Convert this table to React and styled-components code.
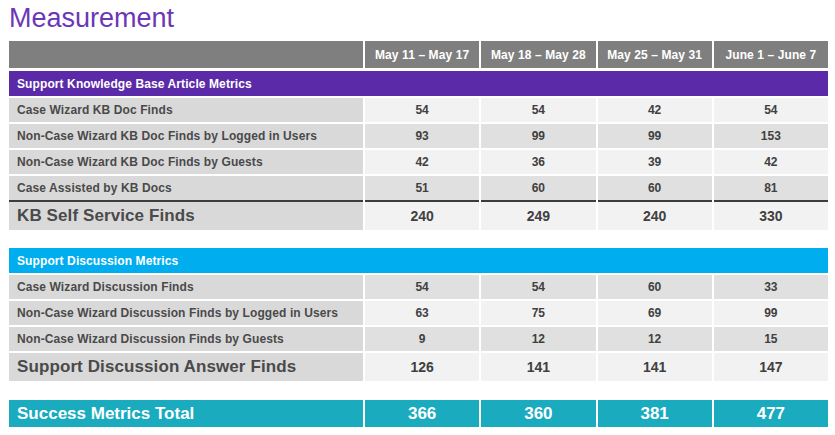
import React from "react";
import styled, { createGlobalStyle } from "styled-components";

const Global = createGlobalStyle`
  body {
    margin: 0;
    background: #fff;
    font-family: "Liberation Sans", Arial, sans-serif;
  }
`;

const Page = styled.div`
  padding: 0 7px 0 9px;
`;

const Title = styled.h1`
  margin: 0;
  height: 41px;
  font-size: 27px;
  font-weight: normal;
  line-height: 36px;
  color: #6c36b6;
`;

const Grid = styled.div`
  display: grid;
  grid-template-columns: 354px repeat(4, 1fr);
  column-gap: 2px;
  row-gap: 2px;
  margin-bottom: ${(p) => p.$space || 0}px;
`;

const HeadCell = styled.div`
  background: #7f7f7f;
  color: #fff;
  font-weight: bold;
  font-size: 12px;
  letter-spacing: 0.1px;
  height: 27px;
  margin-bottom: 1px;
  display: flex;
  align-items: center;
  justify-content: center;
`;

const SectionBar = styled.div`
  grid-column: 1 / -1;
  background: ${(p) => p.$color};
  color: #fff;
  font-weight: bold;
  font-size: 12px;
  letter-spacing: 0.1px;
  height: 25px;
  display: flex;
  align-items: center;
  padding-left: 8px;
`;

const Label = styled.div`
  background: #d9d9d9;
  color: #4a4a4a;
  font-weight: bold;
  font-size: ${(p) => (p.$big ? 17 : 12)}px;
  letter-spacing: 0.1px;
  height: ${(p) => (p.$big ? 28 : 24)}px;
  display: flex;
  align-items: center;
  padding-left: 8px;
  border-bottom: ${(p) => (p.$rule ? "2px solid #3c3c3c" : "none")};
  margin-bottom: ${(p) => (p.$rule ? "-2px" : "0")};
`;

const Value = styled.div`
  background: ${(p) => (p.$dark ? "#e0e0e0" : "#f2f2f2")};
  color: #404040;
  font-weight: bold;
  font-size: ${(p) => (p.$big ? 14 : 12)}px;
  height: ${(p) => (p.$big ? 28 : 24)}px;
  display: flex;
  align-items: center;
  justify-content: center;
  border-bottom: ${(p) => (p.$rule ? "2px solid #3c3c3c" : "none")};
  margin-bottom: ${(p) => (p.$rule ? "-2px" : "0")};
`;

const TotalLabel = styled.div`
  background: #1aabbf;
  color: #fff;
  font-weight: bold;
  font-size: 17px;
  height: 27px;
  display: flex;
  align-items: center;
  padding-left: 8px;
`;

const TotalValue = styled(TotalLabel)`
  justify-content: center;
  padding-left: 0;
`;

const weeks = ["May 11 \u2013 May 17", "May 18 \u2013 May 28", "May 25 \u2013 May 31", "June 1 \u2013 June 7"];

const kbRows = [
  ["Case Wizard KB Doc Finds", [54, 54, 42, 54]],
  ["Non-Case Wizard KB Doc Finds by Logged in Users", [93, 99, 99, 153]],
  ["Non-Case Wizard KB Doc Finds by Guests", [42, 36, 39, 42]],
  ["Case Assisted by KB Docs", [51, 60, 60, 81]],
];

const discRows = [
  ["Case Wizard Discussion Finds", [54, 54, 60, 33]],
  ["Non-Case Wizard Discussion Finds by Logged in Users", [63, 75, 69, 99]],
  ["Non-Case Wizard Discussion Finds by Guests", [9, 12, 12, 15]],
];

function Rows({ rows, total, totalLabel, rule }) {
  const n = rows.length;
  return (
    <>
      {rows.map(([label, vals], i) => {
        const dark = (n - i) % 2 === 1;
        const last = rule && i === n - 1;
        return (
          <React.Fragment key={label}>
            <Label $rule={last}>{label}</Label>
            {vals.map((v, j) => (
              <Value key={j} $dark={dark} $rule={last}>{v}</Value>
            ))}
          </React.Fragment>
        );
      })}
      <Label $big>{totalLabel}</Label>
      {total.map((v, j) => (
        <Value key={j} $big>{v}</Value>
      ))}
    </>
  );
}

export default function App() {
  return (
    <Page>
      <Global />
      <Title>Measurement</Title>
      <Grid $space={18}>
        <HeadCell />
        {weeks.map((w) => (
          <HeadCell key={w}>{w}</HeadCell>
        ))}
        <SectionBar $color="#5b2aa9">Support Knowledge Base Article Metrics</SectionBar>
        <Rows rows={kbRows} total={[240, 249, 240, 330]} totalLabel="KB Self Service Finds" rule />
      </Grid>
      <Grid $space={19}>
        <SectionBar $color="#00aeef">Support Discussion Metrics</SectionBar>
        <Rows rows={discRows} total={[126, 141, 141, 147]} totalLabel="Support Discussion Answer Finds" />
      </Grid>
      <Grid>
        <TotalLabel>Success Metrics Total</TotalLabel>
        {[366, 360, 381, 477].map((v, j) => (
          <TotalValue key={j}>{v}</TotalValue>
        ))}
      </Grid>
    </Page>
  );
}
